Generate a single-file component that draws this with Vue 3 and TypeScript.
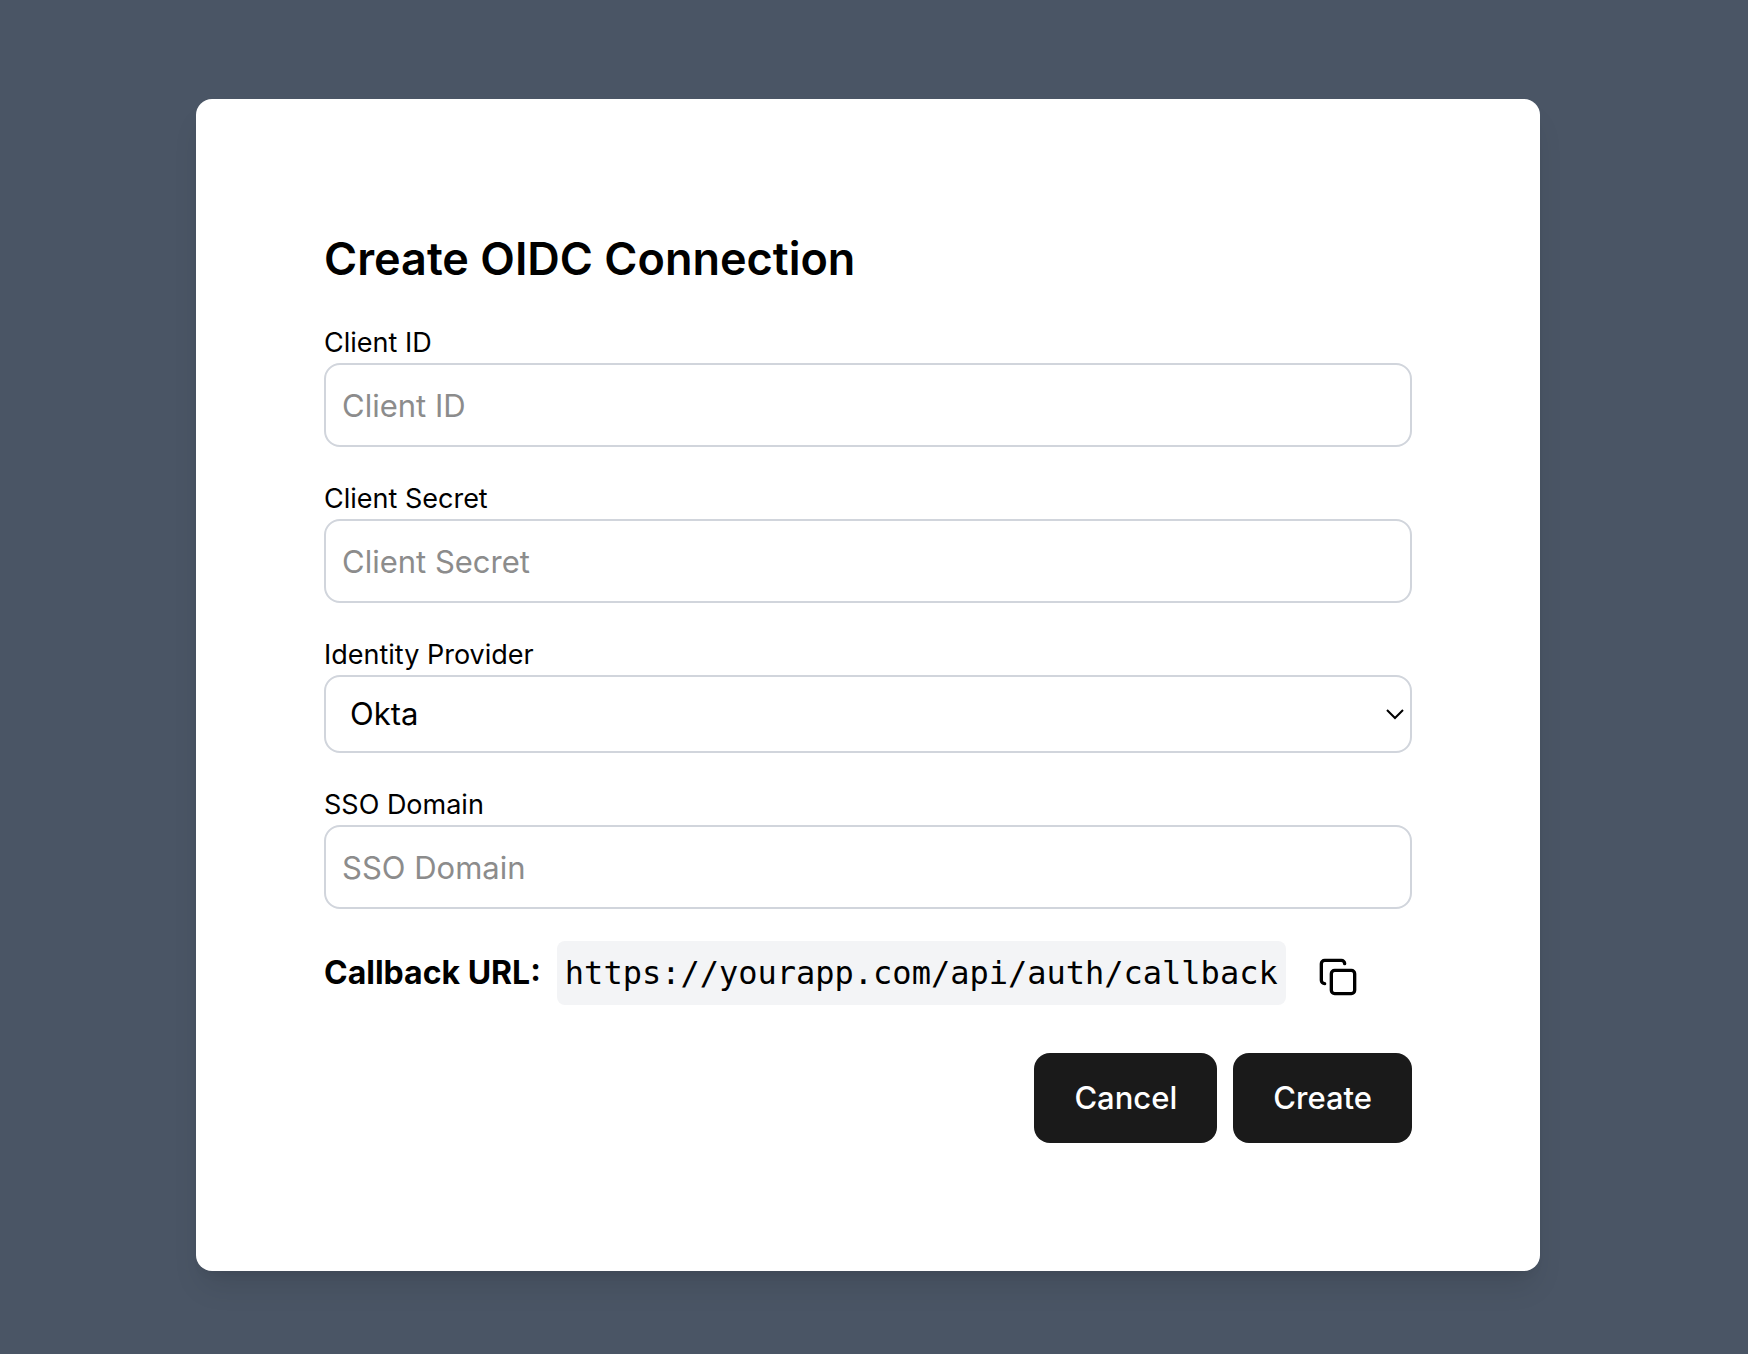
<script setup lang="ts">
import { ref } from 'vue'

const clientId = ref('')
const clientSecret = ref('')
const provider = ref('okta')
const ssoDomain = ref('')
const callbackUrl = 'https://yourapp.com/api/auth/callback'

const providers = [
  { value: 'okta', label: 'Okta' },
  { value: 'auth0', label: 'Auth0' },
  { value: 'entra', label: 'Microsoft Entra ID' },
]

function copyUrl() {
  navigator.clipboard?.writeText(callbackUrl)
}
</script>

<template>
  <div class="overlay">
    <form class="dialog" role="dialog" aria-labelledby="dialog-title" @submit.prevent>
      <h2 id="dialog-title" class="title">Create OIDC Connection</h2>

      <div class="field">
        <label class="label" for="client-id">Client ID</label>
        <input id="client-id" v-model="clientId" class="control" type="text" placeholder="Client ID" />
      </div>

      <div class="field">
        <label class="label" for="client-secret">Client Secret</label>
        <input id="client-secret" v-model="clientSecret" class="control" type="password" placeholder="Client Secret" />
      </div>

      <div class="field">
        <label class="label" for="provider">Identity Provider</label>
        <div class="select-wrap">
          <select id="provider" v-model="provider" class="control select">
            <option v-for="p in providers" :key="p.value" :value="p.value">{{ p.label }}</option>
          </select>
          <svg class="chevron" viewBox="0 0 20 12" aria-hidden="true">
            <path d="M2 2l8 8 8-8" />
          </svg>
        </div>
      </div>

      <div class="field">
        <label class="label" for="sso-domain">SSO Domain</label>
        <input id="sso-domain" v-model="ssoDomain" class="control" type="text" placeholder="SSO Domain" />
      </div>

      <div class="callback">
        <strong class="callback-label">Callback URL:</strong>
        <code class="callback-url">{{ callbackUrl }}</code>
        <button class="copy" type="button" aria-label="Copy callback URL" @click="copyUrl">
          <svg class="copy-icon" viewBox="0 0 24 24" aria-hidden="true">
            <rect x="8" y="8" width="14" height="14" rx="2" />
            <path d="M4 16c-1.1 0-2-.9-2-2V4c0-1.1.9-2 2-2h10c1.1 0 2 .9 2 2" />
          </svg>
        </button>
      </div>

      <div class="actions">
        <button class="action" type="button">Cancel</button>
        <button class="action" type="submit">Create</button>
      </div>
    </form>
  </div>
</template>

<style>
body {
  background: #4a5565;
}
</style>

<style scoped>
.overlay {
  display: flex;
  align-items: center;
  justify-content: center;
  box-sizing: border-box;
  min-height: 100vh;
  padding: 16px 16px 0 4px;
  background: #4a5565;
  color: #000;
  font-family: Inter, 'Liberation Sans', sans-serif;
  font-size: 31px;
  line-height: 48px;
}

.dialog {
  display: flex;
  flex-direction: column;
  gap: 32px;
  box-sizing: border-box;
  width: 100%;
  max-width: 1344px;
  padding: 128px;
  border-radius: 16px;
  background: #fff;
  box-shadow: 0 20px 30px -6px rgba(0, 0, 0, 0.1), 0 8px 12px -8px rgba(0, 0, 0, 0.1);
}

.title {
  margin: 0;
  font-size: 45px;
  font-weight: 600;
  line-height: 64px;
}

.field {
  display: flex;
  flex-direction: column;
}

.label {
  font-size: 27px;
  line-height: 40px;
}

.control {
  box-sizing: border-box;
  width: 100%;
  height: 84px;
  padding: 0 16px;
  border: 2px solid #d1d5dc;
  border-radius: 16px;
  background: #fff;
  color: #000;
  font: inherit;
}

.control::placeholder {
  color: #8c8c8c;
  opacity: 1;
}

.select-wrap {
  position: relative;
  display: flex;
}

.select {
  height: 78px;
  padding: 0 24px;
  appearance: none;
}

.chevron {
  position: absolute;
  top: 50%;
  right: 7px;
  width: 20px;
  height: 12px;
  margin-top: -6px;
  fill: none;
  stroke: #000;
  stroke-width: 2;
  pointer-events: none;
}

.callback {
  display: flex;
  align-items: center;
  gap: 16px;
  font-size: 32px;
}

.callback-url {
  padding: 8px;
  border-radius: 8px;
  background: #f3f4f6;
  font-family: 'DejaVu Sans Mono', monospace;
  font-size: 32px;
}

.copy {
  display: flex;
  align-self: flex-end;
  margin-left: 8px;
  padding: 8px;
  border: 0;
  background: none;
  color: #000;
}

.copy-icon {
  width: 40px;
  height: 40px;
  fill: none;
  stroke: currentColor;
  stroke-width: 2;
  stroke-linecap: round;
  stroke-linejoin: round;
}

.actions {
  display: flex;
  justify-content: flex-end;
  gap: 16px;
  margin-top: 16px;
}

.action {
  height: 90px;
  padding: 0 40px;
  border: 0;
  border-radius: 16px;
  background: #1a1a1a;
  color: #fff;
  font: inherit;
  font-weight: 500;
}
</style>
